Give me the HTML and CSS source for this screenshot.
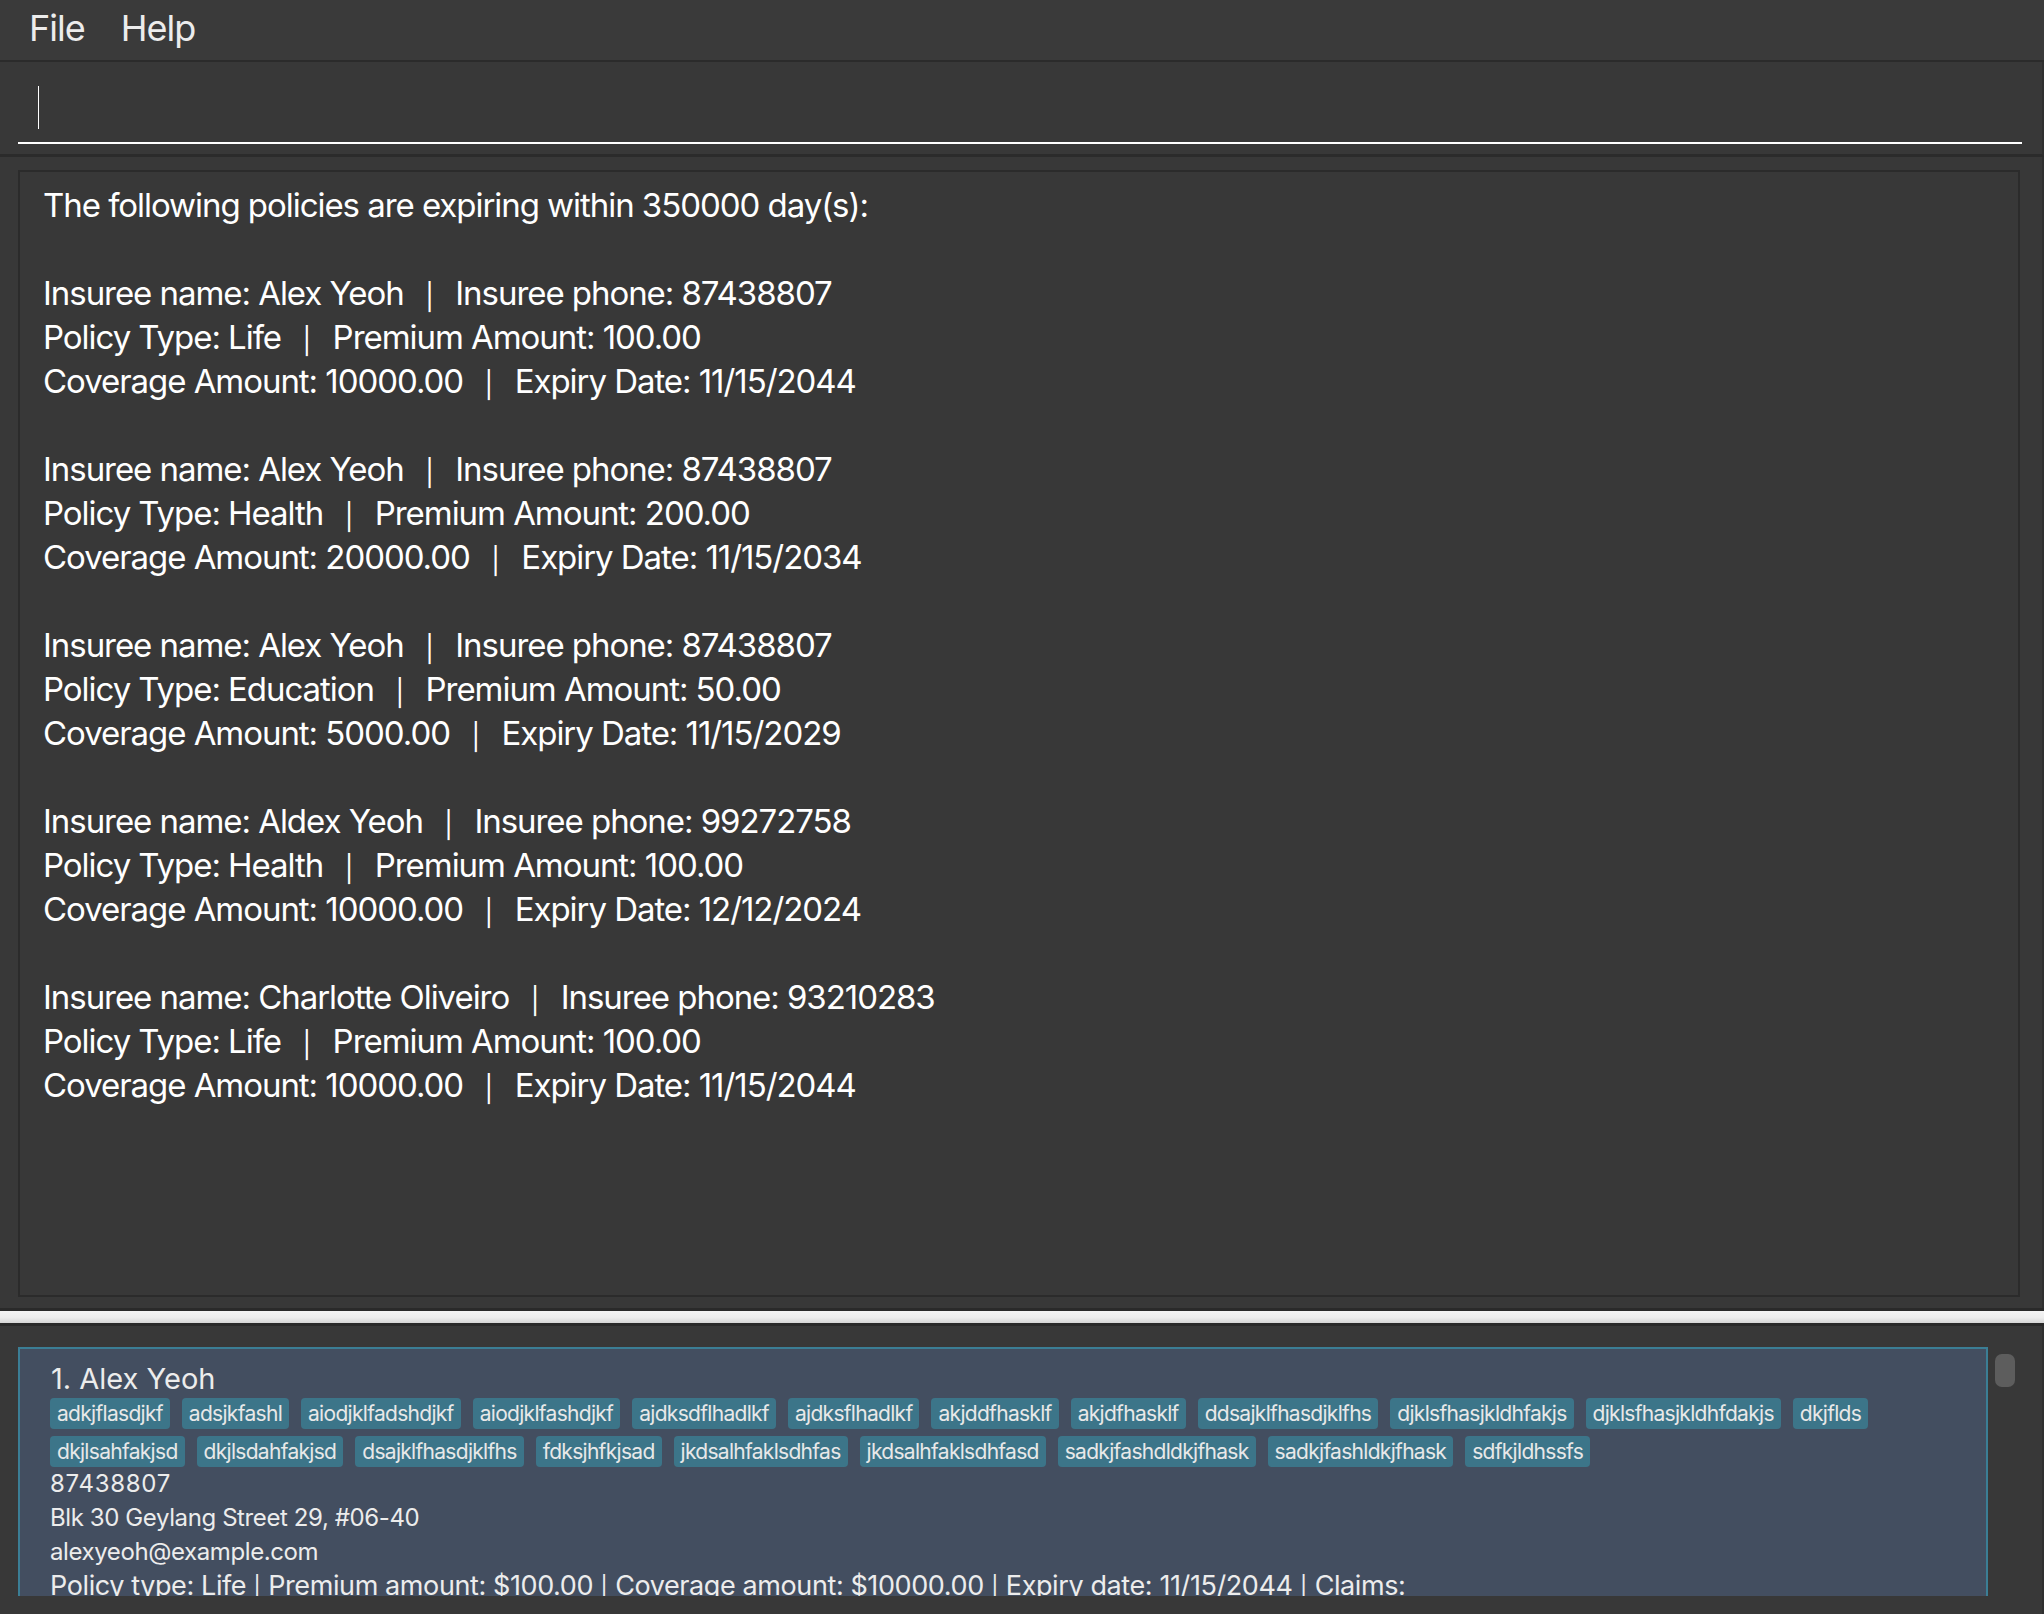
FILE: index.html
```html
<!DOCTYPE html>
<html lang="en">
<head>
<meta charset="utf-8">
<title>Policy Manager</title>
<link rel="stylesheet" href="styles.css">
</head>
<body>
<div class="app">
  <nav class="menubar">
    <span class="menu-item">File</span>
    <span class="menu-item">Help</span>
  </nav>

  <section class="command">
    <div class="command-input"><span class="caret"></span></div>
  </section>

  <section class="result-panel">
    <div class="result-box"><div class="result-text">The following policies are expiring within 350000 day(s):

Insuree name: Alex Yeoh  <span class="sep">|</span>  Insuree phone: 87438807
Policy Type: Life  <span class="sep">|</span>  Premium Amount: 100.00
Coverage Amount: 10000.00  <span class="sep">|</span>  Expiry Date: 11/15/2044

Insuree name: Alex Yeoh  <span class="sep">|</span>  Insuree phone: 87438807
Policy Type: Health  <span class="sep">|</span>  Premium Amount: 200.00
Coverage Amount: 20000.00  <span class="sep">|</span>  Expiry Date: 11/15/2034

Insuree name: Alex Yeoh  <span class="sep">|</span>  Insuree phone: 87438807
Policy Type: Education  <span class="sep">|</span>  Premium Amount: 50.00
Coverage Amount: 5000.00  <span class="sep">|</span>  Expiry Date: 11/15/2029

Insuree name: Aldex Yeoh  <span class="sep">|</span>  Insuree phone: 99272758
Policy Type: Health  <span class="sep">|</span>  Premium Amount: 100.00
Coverage Amount: 10000.00  <span class="sep">|</span>  Expiry Date: 12/12/2024

Insuree name: Charlotte Oliveiro  <span class="sep">|</span>  Insuree phone: 93210283
Policy Type: Life  <span class="sep">|</span>  Premium Amount: 100.00
Coverage Amount: 10000.00  <span class="sep">|</span>  Expiry Date: 11/15/2044</div></div>
  </section>

  <div class="divider"></div>

  <section class="list-panel">
    <div class="list-viewport">
      <article class="card">
        <div class="card-name">1. Alex Yeoh</div>
        <div class="tags">
          <span class="tag">adkjflasdjkf</span>
          <span class="tag">adsjkfashl</span>
          <span class="tag">aiodjklfadshdjkf</span>
          <span class="tag">aiodjklfashdjkf</span>
          <span class="tag">ajdksdflhadlkf</span>
          <span class="tag">ajdksflhadlkf</span>
          <span class="tag">akjddfhasklf</span>
          <span class="tag">akjdfhasklf</span>
          <span class="tag">ddsajklfhasdjklfhs</span>
          <span class="tag">djklsfhasjkldhfakjs</span>
          <span class="tag">djklsfhasjkldhfdakjs</span>
          <span class="tag">dkjflds</span>
          <span class="tag">dkjlsahfakjsd</span>
          <span class="tag">dkjlsdahfakjsd</span>
          <span class="tag">dsajklfhasdjklfhs</span>
          <span class="tag">fdksjhfkjsad</span>
          <span class="tag">jkdsalhfaklsdhfas</span>
          <span class="tag">jkdsalhfaklsdhfasd</span>
          <span class="tag">sadkjfashdldkjfhask</span>
          <span class="tag">sadkjfashldkjfhask</span>
          <span class="tag">sdfkjldhssfs</span>
        </div>
        <div class="card-line phone">87438807</div>
        <div class="card-line">Blk 30 Geylang Street 29, #06-40</div>
        <div class="card-line">alexyeoh@example.com</div>
        <div class="card-line policy">Policy type: Life <span class="sep">|</span> Premium amount: $100.00 <span class="sep">|</span> Coverage amount: $10000.00 <span class="sep">|</span> Expiry date: 11/15/2044 <span class="sep">|</span> Claims:</div>
      </article>
    </div>
    <div class="scroll-track"><div class="scroll-thumb"></div></div>
  </section>
</div>
</body>
</html>
```

FILE: styles.css
```css
* { box-sizing: border-box; }

html, body {
  margin: 0;
  padding: 0;
  background: #383838;
}

body {
  font-family: "Inter", "Noto Sans", sans-serif;
  color: #ffffff;
}

.app {
  width: 2044px;
  height: 1614px;
  display: flex;
  flex-direction: column;
  overflow: hidden;
  background: #383838;
}

/* Menu bar */
.menubar {
  height: 62px;
  flex: none;
  display: flex;
  align-items: flex-start;
  gap: 36px;
  padding: 6px 0 0 29px;
  background: #3a3a3a;
  border-bottom: 2px solid #2b2b2b;
}

.menu-item {
  font-size: 36px;
  line-height: 44px;
  color: #ececec;
  letter-spacing: -1px;
}

/* Command box */
.command {
  flex: none;
  padding: 24px 20px 10px 18px;
  border-bottom: 3px solid #2b2b2b;
  border-right: 2px solid #2f2f2f;
}

.command-input {
  height: 58px;
  padding-left: 20px;
  border-bottom: 2px solid #ffffff;
}

.caret {
  display: block;
  width: 1px;
  height: 43px;
  background: #ffffff;
}

/* Result display */
.result-panel {
  flex: none;
  height: 1151px;
  padding: 13px 22px 11px 18px;
  border-right: 2px solid #2f2f2f;
}

.result-box {
  height: 100%;
  border: 2px solid #2b2b2b;
  padding: 11px 23px;
  overflow: hidden;
}

.result-text {
  white-space: pre;
  font-size: 33px;
  line-height: 44px;
  letter-spacing: -1.05px;
  color: #ffffff;
}

.sep {
  font-size: 26px;
  line-height: 1;
  vertical-align: -1px;
  letter-spacing: 0;
}

.result-text .sep {
  margin: 0 5px;
}

/* Split divider */
.divider {
  flex: none;
  height: 18px;
  border-top: 3px solid #2a2a2a;
  border-bottom: 3px solid #2a2a2a;
  background: linear-gradient(#f4f4f4, #ededed 55%, #d6d6d6);
}

/* Person list */
.list-panel {
  flex: 1;
  min-height: 0;
  display: flex;
  padding: 21px 2px 18px 18px;
  border-right: 2px solid #2f2f2f;
}

.list-viewport {
  flex: 1;
  min-width: 0;
  overflow: hidden;
}

.card {
  background: #434e60;
  border: 2px solid #3b7e95;
  padding: 12px 30px 20px 30px;
  color: #ececec;
}

.card-name {
  font-size: 29px;
  line-height: 35px;
  letter-spacing: 0;
  margin-left: 1px;
  margin-bottom: 2px;
}

.tags {
  display: flex;
  flex-wrap: wrap;
  gap: 7px 12px;
}

.tag {
  background: #3c7589;
  color: #e8e8e8;
  font-size: 21px;
  line-height: 31px;
  height: 31px;
  padding: 0 7px;
  border-radius: 4px;
  letter-spacing: -0.7px;
}

.card-line {
  font-size: 24px;
  line-height: 34px;
  letter-spacing: -0.4px;
  white-space: nowrap;
}

.card-line.phone {
  letter-spacing: 0.7px;
}

.card-line.policy {
  font-size: 27px;
}

.card-line .sep {
  font-size: 23px;
  vertical-align: -1px;
}

.scroll-track {
  flex: none;
  width: 52px;
  padding: 7px 0 0 7px;
}

.scroll-thumb {
  width: 20px;
  height: 33px;
  border-radius: 7px;
  background: #5d5d5d;
}
```
